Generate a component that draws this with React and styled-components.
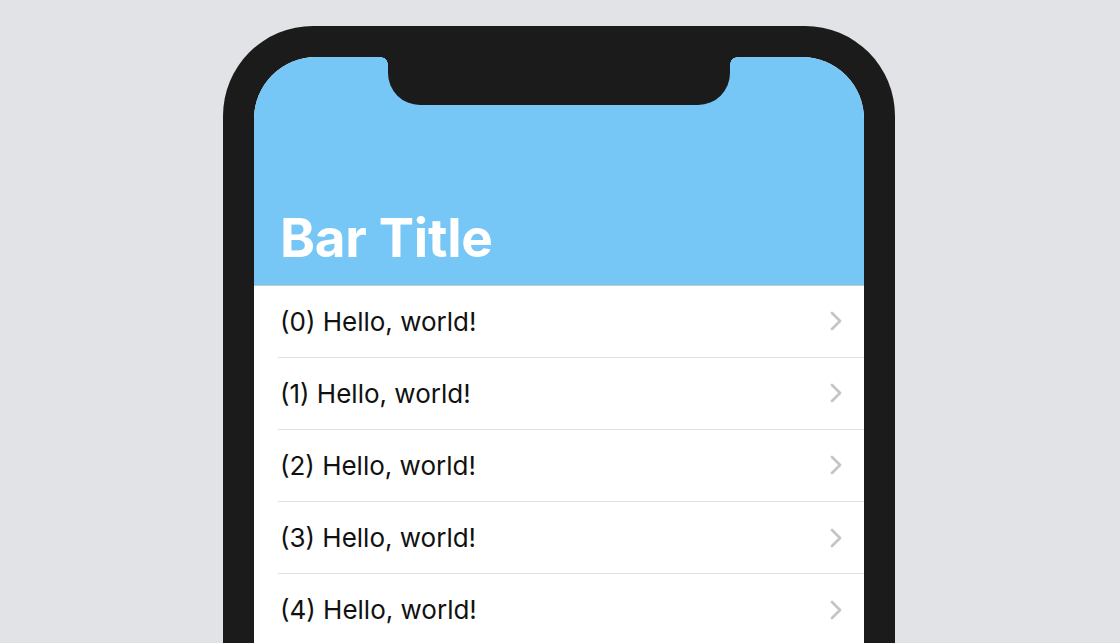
import React from "react";
import styled, { createGlobalStyle } from "styled-components";

const Global = createGlobalStyle`
  html, body {
    margin: 0;
    padding: 0;
    height: 100%;
    overflow: hidden;
    background: #e2e3e7;
  }
  body {
    font-family: Inter, "Noto Sans", "Liberation Sans", sans-serif;
  }
`;

const Page = styled.div`
  width: 1120px;
  height: 643px;
  display: flex;
  justify-content: flex-start;
  padding: 26px 0 0 223px;
  box-sizing: border-box;
  overflow: hidden;
`;

const Phone = styled.div`
  width: 672px;
  height: 760px;
  box-sizing: border-box;
  padding: 31px;
  background: #1b1b1b;
  border-radius: 90px;
  flex-shrink: 0;
`;

const Screen = styled.div`
  position: relative;
  height: 100%;
  background: #ffffff;
  border-radius: 62px;
  overflow: hidden;
  display: flex;
  flex-direction: column;
`;

const Notch = styled.div`
  position: absolute;
  top: 0;
  left: 50%;
  transform: translateX(-50%);
  width: 342px;
  height: 48px;
  background: #1b1b1b;
  border-radius: 0 0 32px 32px;

  &::before,
  &::after {
    content: "";
    position: absolute;
    top: 0;
    width: 7px;
    height: 7px;
  }
  &::before {
    left: -7px;
    background: radial-gradient(circle at 0 100%, transparent 6.5px, #1b1b1b 7px);
  }
  &::after {
    right: -7px;
    background: radial-gradient(circle at 100% 100%, transparent 6.5px, #1b1b1b 7px);
  }
`;

const Header = styled.header`
  height: 228.5px;
  flex-shrink: 0;
  box-sizing: border-box;
  background: #76c6f6;
  border-bottom: 1px solid #c4c9cc;
  display: flex;
  align-items: flex-end;
  padding: 0 24px 19px 26px;
`;

const Title = styled.h1`
  margin: 0;
  color: #ffffff;
  font-size: 53px;
  line-height: 55px;
  font-weight: 700;
  letter-spacing: -0.3px;
`;

const List = styled.ul`
  list-style: none;
  margin: 0;
  padding: 0 0 0 24px;
`;

const Row = styled.li`
  height: 72.2px;
  box-sizing: border-box;
  border-bottom: 1px solid #e2e2e4;
  display: flex;
  align-items: center;
  justify-content: space-between;
  padding-right: 22px;
`;

const Label = styled.span`
  margin-left: 2px;
  font-size: 26px;
  color: #111111;
  font-weight: 400;
`;

const Chevron = () => (
  <svg width="12" height="20" viewBox="0 0 12 20" fill="none">
    <path
      d="M2 2 L10 10 L2 18"
      stroke="#c5c5c8"
      strokeWidth="2.8"
      strokeLinecap="round"
      strokeLinejoin="round"
    />
  </svg>
);

const items = [0, 1, 2, 3, 4];

export default function App() {
  return (
    <>
      <Global />
      <Page>
        <Phone>
          <Screen>
            <Header>
              <Title>Bar Title</Title>
            </Header>
            <List>
              {items.map((i) => (
                <Row key={i}>
                  <Label>({i}) Hello, world!</Label>
                  <Chevron />
                </Row>
              ))}
            </List>
            <Notch />
          </Screen>
        </Phone>
      </Page>
    </>
  );
}
